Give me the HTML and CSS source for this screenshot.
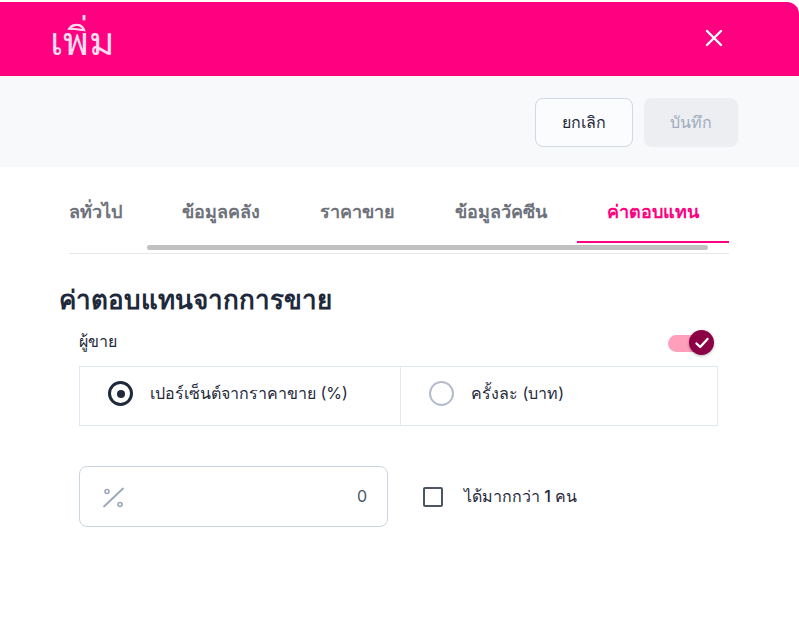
FILE: index.html
```html
<!DOCTYPE html>
<html lang="th">
<head>
<meta charset="utf-8">
<link rel="stylesheet" href="styles.css">
</head>
<body>
<div class="modal">
  <header class="header">
    <h1 class="title">เพิ่ม</h1>
    <button class="close" aria-label="close">
      <svg width="18" height="18" viewBox="0 0 18 18"><path d="M2 2 L16 16 M16 2 L2 16" stroke="#fff" stroke-width="2.4" stroke-linecap="round"/></svg>
    </button>
  </header>
  <div class="toolbar">
    <button class="btn btn-cancel">ยกเลิก</button>
    <button class="btn btn-save">บันทึก</button>
  </div>
  <div class="tabs-wrap">
    <div class="tabs">
      <div class="tab">ข้อมูลทั่วไป</div>
      <div class="tab">ข้อมูลคลัง</div>
      <div class="tab">ราคาขาย</div>
      <div class="tab">ข้อมูลวัคซีน</div>
      <div class="tab active">ค่าตอบแทน</div>
    </div>
    <div class="scrollbar"><div class="thumb"></div></div>
  </div>
  <section class="content">
    <h2 class="section-title">ค่าตอบแทนจากการขาย</h2>
    <div class="group">
      <div class="row-label">
        <span class="label">ผู้ขาย</span>
        <span class="toggle">
          <span class="track"></span>
          <span class="knob">
            <svg width="16" height="16" viewBox="0 0 16 16"><path d="M2.5 8.5 L6.2 12 L13.5 4" fill="none" stroke="#fff" stroke-width="2.4" stroke-linecap="round" stroke-linejoin="round"/></svg>
          </span>
        </span>
      </div>
      <div class="radio-box">
        <label class="radio-cell">
          <span class="radio checked"></span>
          <span class="radio-text">เปอร์เซ็นต์จากราคาขาย (%)</span>
        </label>
        <label class="radio-cell">
          <span class="radio"></span>
          <span class="radio-text">ครั้งละ (บาท)</span>
        </label>
      </div>
      <div class="input-row">
        <div class="input">
          <svg class="unit" width="24" height="24" viewBox="0 0 24 24"><circle cx="5" cy="5.5" r="2" fill="none" stroke="#9aa6ba" stroke-width="1.6"/><circle cx="18" cy="18.5" r="2" fill="none" stroke="#9aa6ba" stroke-width="1.6"/><path d="M2 20.5 L21 2.5" stroke="#9aa6ba" stroke-width="1.8" stroke-linecap="round"/></svg>
          <span class="value">0</span>
        </div>
        <label class="check">
          <span class="checkbox"></span>
          <span class="check-text">ได้มากกว่า 1 คน</span>
        </label>
      </div>
    </div>
  </section>
</div>
</body>
</html>
```

FILE: styles.css
```css
* { box-sizing: border-box; }
html, body { margin: 0; padding: 0; background: #ffffff; }
body {
  font-family: Inter, "Noto Sans", sans-serif;
  color: #1e293b;
  width: 799px;
  height: 629px;
  overflow: hidden;
}
.modal {
  margin-top: 2px;
  background: #fff;
  height: 627px;
}
.header {
  height: 74px;
  background: #ff0080;
  border-top-right-radius: 12px;
  display: flex;
  align-items: center;
  justify-content: space-between;
  padding: 0 76px 0 50px;
}
.title {
  margin: 0;
  font-size: 39px;
  font-weight: 500;
  color: #ffdcee;
  line-height: 1;
  padding-top: 2px;
}
.close {
  border: 0;
  background: transparent;
  padding: 0;
  width: 18px;
  height: 18px;
  display: flex;
  margin-top: -3px;
}
.toolbar {
  height: 91px;
  background: #f8f9fb;
  display: flex;
  justify-content: flex-end;
  align-items: flex-start;
  gap: 11px;
  padding: 22px 61px 0 0;
}
.btn {
  height: 49px;
  border-radius: 8px;
  font-family: inherit;
  font-size: 16px;
  font-weight: 500;
  padding: 0;
}
.btn-cancel {
  width: 98px;
  background: #fbfcfd;
  border: 1px solid #cfd8e3;
  color: #1e293b;
}
.btn-save {
  width: 94px;
  background: #eceef2;
  border: 0;
  color: #a0abbe;
}
.tabs-wrap {
  margin: 0 70px 0 69px;
  padding-top: 26px;
  border-bottom: 1px solid #e5e7eb;
  padding-bottom: 3px;
}
.tabs {
  display: flex;
  justify-content: flex-end;
  overflow: hidden;
}
.tab {
  flex-shrink: 0;
  padding: 0 30px;
  height: 50px;
  line-height: 38px;
  font-size: 18px;
  font-weight: 600;
  color: #6e727b;
  border-bottom: 2px solid transparent;
  white-space: nowrap;
}
.tab.active {
  color: #ff0080;
  border-bottom-color: #ff0080;
}
.scrollbar {
  height: 5px;
  margin-top: 2px;
}
.thumb {
  margin-left: 78px;
  width: 561px;
  height: 5px;
  border-radius: 3px;
  background: #c1c1c1;
}
.content {
  padding: 29px 81px 0 59px;
}
.section-title {
  margin: 0;
  font-size: 26px;
  font-weight: 700;
  color: #1e293b;
  line-height: 34px;
}
.group {
  margin-left: 20px;
}
.row-label {
  display: flex;
  justify-content: space-between;
  align-items: center;
  margin-top: 13px;
  height: 26px;
}
.label {
  font-size: 16px;
  color: #1e293b;
  margin-top: -3px;
}
.toggle {
  position: relative;
  width: 46px;
  height: 26px;
  margin-right: 4px;
}
.track {
  position: absolute;
  left: 0;
  top: 5px;
  width: 36px;
  height: 17px;
  border-radius: 9px;
  background: #ff9fbc;
}
.knob {
  position: absolute;
  right: 0;
  top: 0;
  width: 25px;
  height: 25px;
  border-radius: 50%;
  background: #8c0046;
  box-shadow: 0 1px 3px rgba(0,0,0,0.3);
  display: flex;
  align-items: center;
  justify-content: center;
}
.radio-box {
  margin-top: 10px;
  display: grid;
  grid-template-columns: 320px 1fr;
  border: 1px solid #e2e8f0;
  height: 60px;
}
.radio-cell {
  display: flex;
  align-items: center;
  gap: 17px;
  padding-left: 28px;
  padding-bottom: 5px;
}
.radio-cell + .radio-cell {
  border-left: 1px solid #e2e8f0;
}
.radio {
  width: 25px;
  height: 25px;
  border-radius: 50%;
  border: 2px solid #b3bccb;
  flex-shrink: 0;
  display: flex;
  align-items: center;
  justify-content: center;
}
.radio.checked {
  border: 3px solid #1e293b;
}
.radio.checked::after {
  content: "";
  width: 8px;
  height: 8px;
  border-radius: 50%;
  background: #1e293b;
}
.radio-text {
  font-size: 16px;
  color: #1e293b;
}
.input-row {
  margin-top: 40px;
  display: flex;
  align-items: center;
  gap: 35px;
}
.input {
  width: 309px;
  height: 61px;
  border: 1px solid #cbd5e1;
  border-radius: 8px;
  display: flex;
  align-items: center;
  justify-content: space-between;
  padding: 0 20px 0 22px;
}
.unit {
  display: block;
  margin-top: 2px;
}
.value {
  font-size: 16px;
  color: #475569;
  margin-top: -2px;
}
.check {
  display: flex;
  align-items: center;
  gap: 21px;
}
.checkbox {
  width: 20px;
  height: 20px;
  border: 2px solid #4b5563;
  border-radius: 2px;
}
.check-text {
  font-size: 16px;
  font-weight: 500;
  color: #1e293b;
}
```
